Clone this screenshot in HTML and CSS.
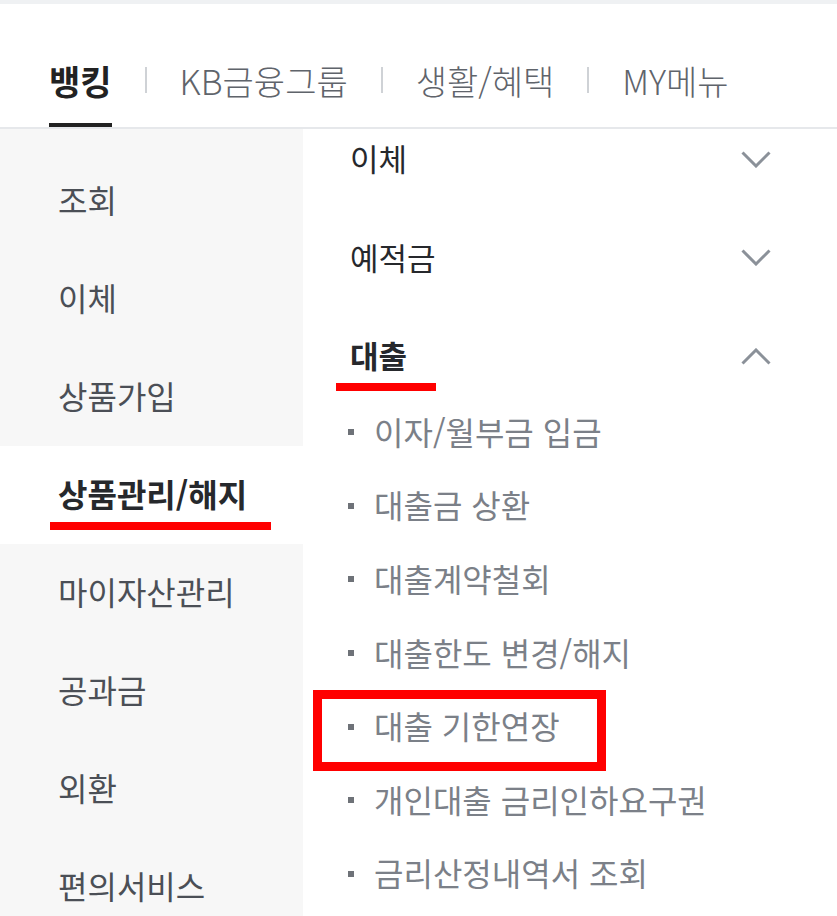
FILE: index.html
```html
<!DOCTYPE html>
<html lang="ko">
  <head>
    <meta charset="UTF-8" />
    <meta name="viewport" content="width=device-width, initial-scale=1.0" />
    <title>전체메뉴</title>
    <link rel="stylesheet" href="styles.css">
  </head>
  <body>
    <div class="top-band"></div>
    <nav class="tabbar">
      <ul class="tabbar-menu">
        <li class="tabbar-menu__item tabbar-menu__item--active">뱅킹</li>
        <li class="tabbar-menu__sep"></li>
        <li class="tabbar-menu__item">KB금융그룹</li>
        <li class="tabbar-menu__sep"></li>
        <li class="tabbar-menu__item">생활/혜택</li>
        <li class="tabbar-menu__sep"></li>
        <li class="tabbar-menu__item">MY메뉴</li>
      </ul>
    </nav>

    <div class="menu-body">
      <ul class="side-menu">
        <li class="side-menu__item">조회</li>
        <li class="side-menu__item">이체</li>
        <li class="side-menu__item">상품가입</li>
        <li class="side-menu__item side-menu__item--active">상품관리/해지</li>
        <li class="side-menu__item">마이자산관리</li>
        <li class="side-menu__item">공과금</li>
        <li class="side-menu__item">외환</li>
        <li class="side-menu__item">편의서비스</li>
      </ul>

      <div class="sub-pane">
        <ul class="acc">
          <li class="acc-item">
            <div class="acc-head">
              <span>이체</span>
              <svg class="chevron" viewBox="0 0 30 17" width="30" height="17"><polyline points="1.5,1.5 15,15 28.5,1.5" /></svg>
            </div>
          </li>
          <li class="acc-item">
            <div class="acc-head">
              <span>예적금</span>
              <svg class="chevron" viewBox="0 0 30 17" width="30" height="17"><polyline points="1.5,1.5 15,15 28.5,1.5" /></svg>
            </div>
          </li>
          <li class="acc-item acc-item--open">
            <div class="acc-head">
              <span>대출</span>
              <svg class="chevron" viewBox="0 0 30 17" width="30" height="17"><polyline points="1.5,15.5 15,2 28.5,15.5" /></svg>
            </div>
            <ul class="acc-list">
              <li class="acc-list__item">이자/월부금 입금</li>
              <li class="acc-list__item">대출금 상환</li>
              <li class="acc-list__item">대출계약철회</li>
              <li class="acc-list__item">대출한도 변경/해지</li>
              <li class="acc-list__item acc-list__item--marked">대출 기한연장</li>
              <li class="acc-list__item">개인대출 금리인하요구권</li>
              <li class="acc-list__item">금리산정내역서 조회</li>
            </ul>
          </li>
        </ul>
      </div>
    </div>
  </body>
</html>
```

FILE: styles.css
```css
:root {
  --color-mark: #ff0000;
  --color-text-strong: #26282c;
  --color-text: #4b4f56;
  --color-text-sub: #7b8088;
  --color-side-bg: #f7f7f7;
}
body {
  margin: 0;
  height: 916px;
  overflow: hidden;
  background: #fff;
  font-family: "Noto Sans CJK KR", "Noto Sans", sans-serif;
}
ul {
  margin: 0;
  padding: 0;
  list-style: none;
}

.top-band {
  height: 4px;
  background: #eff1f3;
}

/* top tabs */
.tabbar {
  height: 123px;
  border-bottom: 2px solid #e6e8eb;
  box-sizing: content-box;
}
.tabbar-menu {
  display: flex;
  align-items: center;
  height: 100%;
  padding-left: 49px;
  box-sizing: border-box;
}
.tabbar-menu__item {
  font-size: 34px;
  font-weight: 300;
  color: #5f646b;
  line-height: 52px;
  padding-top: 51px;
  height: 123px;
  box-sizing: border-box;
}
.tabbar-menu__item--active {
  font-weight: 700;
  color: #222;
  border-bottom: 4px solid #222;
  padding-bottom: 1px;
}
.tabbar-menu__sep {
  width: 2px;
  height: 26px;
  margin: 28px 33px 0 33px;
  background: #cfd2d6;
}

.menu-body {
  display: flex;
}

/* left column */
.side-menu {
  width: 303px;
  flex-shrink: 0;
  padding-top: 23px;
  background: var(--color-side-bg);
}
.side-menu__item {
  position: relative;
  display: flex;
  align-items: center;
  height: 98px;
  padding: 0 0 5px 58px;
  box-sizing: border-box;
  font-size: 32px;
  color: var(--color-text);
}
.side-menu__item--active {
  background: #fff;
  font-weight: 700;
  color: var(--color-text-strong);
}
.side-menu__item--active::after {
  content: "";
  position: absolute;
  left: 50px;
  top: 76px;
  width: 221px;
  height: 8px;
  background: var(--color-mark);
}

/* right pane */
.sub-pane {
  flex: 1;
  height: 787px;
  overflow: hidden;
}
.acc {
  margin-top: -19px;
}
.acc-head {
  position: relative;
  display: flex;
  justify-content: space-between;
  align-items: center;
  height: 98.5px;
  padding: 0 66px 0 47px;
  font-size: 31px;
  color: var(--color-text-strong);
}
.acc-head span {
  margin-top: -3px;
}
.acc-item--open .acc-head {
  font-weight: 700;
}
.acc-item--open .acc-head::after {
  content: "";
  position: absolute;
  left: 33px;
  top: 76px;
  width: 100px;
  height: 8px;
  background: var(--color-mark);
}
.chevron {
  fill: none;
  stroke: #8b9199;
  stroke-width: 3;
}
.acc-list {
  margin-top: -10px;
}
.acc-list__item {
  position: relative;
  display: flex;
  align-items: center;
  height: 73.6px;
  padding: 0 0 3px 45px;
  box-sizing: border-box;
  font-size: 32px;
  color: var(--color-text-sub);
}
.acc-list__item::before {
  content: "";
  width: 6px;
  height: 6px;
  margin: 3px 20px 0 0;
  background: #6e7278;
}
.acc-list__item--marked::after {
  content: "";
  position: absolute;
  left: 10px;
  top: 0;
  width: 293px;
  height: 81px;
  border: 9px solid var(--color-mark);
  box-sizing: border-box;
}
```
